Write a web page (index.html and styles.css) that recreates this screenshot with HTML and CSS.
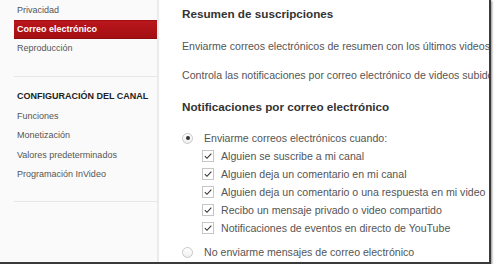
FILE: index.html
```html
<!DOCTYPE html>
<html lang="es">
<head>
<meta charset="utf-8">
<title>Correo electrónico</title>
<link rel="stylesheet" href="styles.css">
</head>
<body>
<div class="frame">
  <aside class="sidebar">
    <ul class="nav">
      <li>Privacidad</li>
      <li class="active">Correo electrónico</li>
      <li>Reproducción</li>
    </ul>
    <div class="divider"></div>
    <div class="nav-title">CONFIGURACIÓN DEL CANAL</div>
    <ul class="nav nav-2">
      <li>Funciones</li>
      <li>Monetización</li>
      <li>Valores predeterminados</li>
      <li>Programación InVideo</li>
    </ul>
    <div class="divider divider-2"></div>
  </aside>
  <main class="content">
    <h2 class="title">Resumen de suscripciones</h2>
    <p class="line line-1">Enviarme correos electrónicos de resumen con los últimos videos de mis suscripciones</p>
    <p class="line line-2">Controla las notificaciones por correo electrónico de videos subidos por tus suscripciones</p>
    <h2 class="title title-2">Notificaciones por correo electrónico</h2>
    <div class="radio-row">
      <span class="radio checked"></span>
      <span>Enviarme correos electrónicos cuando:</span>
    </div>
    <ul class="checks">
      <li><span class="box"><svg viewBox="0 0 12 12" width="12" height="12"><polyline points="2.2,6.2 4.8,8.8 10,3.2" fill="none" stroke="#333" stroke-width="1.3"/></svg></span>Alguien se suscribe a mi canal</li>
      <li><span class="box"><svg viewBox="0 0 12 12" width="12" height="12"><polyline points="2.2,6.2 4.8,8.8 10,3.2" fill="none" stroke="#333" stroke-width="1.3"/></svg></span>Alguien deja un comentario en mi canal</li>
      <li><span class="box"><svg viewBox="0 0 12 12" width="12" height="12"><polyline points="2.2,6.2 4.8,8.8 10,3.2" fill="none" stroke="#333" stroke-width="1.3"/></svg></span>Alguien deja un comentario o una respuesta en mi video</li>
      <li><span class="box"><svg viewBox="0 0 12 12" width="12" height="12"><polyline points="2.2,6.2 4.8,8.8 10,3.2" fill="none" stroke="#333" stroke-width="1.3"/></svg></span>Recibo un mensaje privado o video compartido</li>
      <li><span class="box"><svg viewBox="0 0 12 12" width="12" height="12"><polyline points="2.2,6.2 4.8,8.8 10,3.2" fill="none" stroke="#333" stroke-width="1.3"/></svg></span>Notificaciones de eventos en directo de YouTube</li>
    </ul>
    <div class="radio-row radio-row-2">
      <span class="radio"></span>
      <span>No enviarme mensajes de correo electrónico</span>
    </div>
  </main>
</div>
</body>
</html>
```

FILE: styles.css
```css
* { box-sizing: border-box; }
body {
  margin: 0;
  background: #fff;
  font-family: "Liberation Sans", Arial, sans-serif;
}
.frame {
  display: flex;
  width: 491px;
  height: 264px;
  border-right: 2px solid #3a3a3a;
  border-bottom: 2px solid #3a3a3a;
  box-shadow: 1px 1px 2px rgba(0,0,0,0.45);
  overflow: hidden;
  background: #fff;
}
.sidebar {
  width: 159px;
  flex: none;
  background: #fafafa;
  border-right: 2px solid #ebebeb;
  padding-top: 1px;
}
.nav {
  list-style: none;
  margin: 0;
  padding: 0 0 0 14px;
}
.nav li {
  height: 19px;
  line-height: 19px;
  padding-left: 3px;
  font-size: 9px;
  color: #555;
  white-space: nowrap;
}
.nav li.active {
  background: linear-gradient(#b9161c, #a30f13);
  border-top: 1px solid #a40f14;
  border-bottom: 1px solid #8f0d10;
  line-height: 17px;
  color: #fff;
  font-weight: bold;
}
.nav-2 li {
  height: 19.5px;
  line-height: 19.5px;
}
.divider {
  margin: 18px 0 0 14px;
  height: 1px;
  background: #e6e6e6;
}
.divider-2 { margin-top: 16px; }
.nav-title {
  margin-top: 10px;
  padding-left: 17px;
  font-size: 9px;
  line-height: 19.5px;
  font-weight: bold;
  color: #222;
  white-space: nowrap;
}
.content {
  flex: 1;
  min-width: 0;
  padding-left: 23px;
  color: #555;
  font-size: 10.6px;
  white-space: nowrap;
  overflow: hidden;
}
.title {
  margin: 6px 0 0;
  font-size: 11.7px;
  line-height: 16px;
  font-weight: bold;
  color: #333;
}
.line {
  margin: 16px 0 0;
  line-height: 16px;
}
.line-2 { margin-top: 13px; }
.title-2 { margin-top: 16px; }
.radio-row {
  display: flex;
  align-items: center;
  height: 16px;
  margin-top: 15px;
}
.radio-row-2 { margin-top: 7px; }
.radio {
  position: relative;
  width: 11px;
  height: 11px;
  flex: none;
  border-radius: 50%;
  border: 1px solid #c8c8c8;
  background: linear-gradient(#fff, #f0f0f0);
  margin-right: 11px;
}
.radio.checked::after {
  content: "";
  position: absolute;
  left: 2.5px;
  top: 2.5px;
  width: 4px;
  height: 4px;
  border-radius: 50%;
  background: #333;
}
.checks {
  list-style: none;
  margin: 1px 0 0;
  padding: 0 0 0 20px;
}
.checks li {
  display: flex;
  align-items: center;
  height: 18px;
}
.box {
  display: flex;
  width: 12px;
  height: 12px;
  flex: none;
  border: 1px solid #c6c6c6;
  background: #fff;
  margin-right: 7px;
  align-items: center;
  justify-content: center;
}
.box svg { width: 10px; height: 10px; }
```
